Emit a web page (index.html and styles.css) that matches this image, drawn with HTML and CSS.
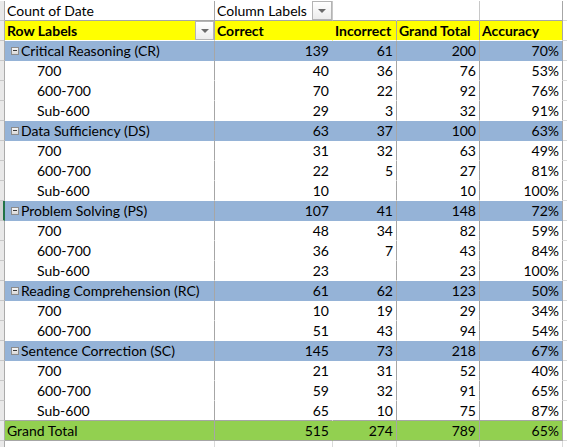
FILE: index.html
```html
<!DOCTYPE html>
<html>
<head>
<meta charset="utf-8">
<link rel="stylesheet" href="styles.css">
</head>
<body>
<div class="sheet">
  <!-- row 1 -->
  <div class="rh"></div>
  <div class="c a top">Count of Date</div>
  <div class="c b top"><span>Column Labels</span><span class="dd dd-top"><i></i></span></div>
  <div class="c cc top"></div>
  <div class="c d top"></div>
  <div class="c e top"></div>
  <div class="c f"></div>
  <!-- header -->
  <div class="rh"></div>
  <div class="c a head"><span>Row Labels</span><span class="dd"><i></i></span></div>
  <div class="c b head">Correct</div>
  <div class="c cc head">Incorrect</div>
  <div class="c d head">Grand Total</div>
  <div class="c e head">Accuracy</div>
  <div class="c f"></div>

  <div class="rh"></div><div class="c a grp"><span class="mb"></span>Critical Reasoning (CR)</div><div class="c b grp n">139</div><div class="c cc grp n">61</div><div class="c d grp n">200</div><div class="c e grp n">70%</div><div class="c f"></div>
  <div class="rh"></div><div class="c a it">700</div><div class="c b it n">40</div><div class="c cc it n">36</div><div class="c d it n">76</div><div class="c e it n">53%</div><div class="c f"></div>
  <div class="rh"></div><div class="c a it">600-700</div><div class="c b it n">70</div><div class="c cc it n">22</div><div class="c d it n">92</div><div class="c e it n">76%</div><div class="c f"></div>
  <div class="rh"></div><div class="c a it">Sub-600</div><div class="c b it n">29</div><div class="c cc it n">3</div><div class="c d it n">32</div><div class="c e it n">91%</div><div class="c f"></div>

  <div class="rh"></div><div class="c a grp"><span class="mb"></span>Data Sufficiency (DS)</div><div class="c b grp n">63</div><div class="c cc grp n">37</div><div class="c d grp n">100</div><div class="c e grp n">63%</div><div class="c f"></div>
  <div class="rh"></div><div class="c a it">700</div><div class="c b it n">31</div><div class="c cc it n">32</div><div class="c d it n">63</div><div class="c e it n">49%</div><div class="c f"></div>
  <div class="rh"></div><div class="c a it">600-700</div><div class="c b it n">22</div><div class="c cc it n">5</div><div class="c d it n">27</div><div class="c e it n">81%</div><div class="c f"></div>
  <div class="rh"></div><div class="c a it">Sub-600</div><div class="c b it n">10</div><div class="c cc it n"></div><div class="c d it n">10</div><div class="c e it n">100%</div><div class="c f"></div>

  <div class="rh active"></div><div class="c a grp"><span class="mb"></span>Problem Solving (PS)</div><div class="c b grp n">107</div><div class="c cc grp n">41</div><div class="c d grp n">148</div><div class="c e grp n">72%</div><div class="c f"></div>
  <div class="rh"></div><div class="c a it">700</div><div class="c b it n">48</div><div class="c cc it n">34</div><div class="c d it n">82</div><div class="c e it n">59%</div><div class="c f"></div>
  <div class="rh"></div><div class="c a it">600-700</div><div class="c b it n">36</div><div class="c cc it n">7</div><div class="c d it n">43</div><div class="c e it n">84%</div><div class="c f"></div>
  <div class="rh"></div><div class="c a it">Sub-600</div><div class="c b it n">23</div><div class="c cc it n"></div><div class="c d it n">23</div><div class="c e it n">100%</div><div class="c f"></div>

  <div class="rh"></div><div class="c a grp"><span class="mb"></span>Reading Comprehension (RC)</div><div class="c b grp n">61</div><div class="c cc grp n">62</div><div class="c d grp n">123</div><div class="c e grp n">50%</div><div class="c f"></div>
  <div class="rh"></div><div class="c a it">700</div><div class="c b it n">10</div><div class="c cc it n">19</div><div class="c d it n">29</div><div class="c e it n">34%</div><div class="c f"></div>
  <div class="rh"></div><div class="c a it">600-700</div><div class="c b it n">51</div><div class="c cc it n">43</div><div class="c d it n">94</div><div class="c e it n">54%</div><div class="c f"></div>

  <div class="rh"></div><div class="c a grp"><span class="mb"></span>Sentence Correction (SC)</div><div class="c b grp n">145</div><div class="c cc grp n">73</div><div class="c d grp n">218</div><div class="c e grp n">67%</div><div class="c f"></div>
  <div class="rh"></div><div class="c a it">700</div><div class="c b it n">21</div><div class="c cc it n">31</div><div class="c d it n">52</div><div class="c e it n">40%</div><div class="c f"></div>
  <div class="rh"></div><div class="c a it">600-700</div><div class="c b it n">59</div><div class="c cc it n">32</div><div class="c d it n">91</div><div class="c e it n">65%</div><div class="c f"></div>
  <div class="rh"></div><div class="c a it last">Sub-600</div><div class="c b it last n">65</div><div class="c cc it last n">10</div><div class="c d it last n">75</div><div class="c e it last n">87%</div><div class="c f"></div>

  <div class="rh"></div><div class="c a tot">Grand Total</div><div class="c b tot n">515</div><div class="c cc tot n">274</div><div class="c d tot n">789</div><div class="c e tot n">65%</div><div class="c f"></div>

  <div class="rh"></div><div class="c a emp"></div><div class="c b emp"></div><div class="c cc emp"></div><div class="c d emp"></div><div class="c e emp"></div><div class="c f"></div>
</div>
</body>
</html>
```
FILE: styles.css
```css
html, body {
  margin: 0;
  padding: 0;
  background: #ffffff;
}
body {
  font-family: "Lato", "Liberation Sans", sans-serif;
  font-size: 14px;
  color: #000000;
  overflow: hidden;
}
.sheet {
  display: grid;
  grid-template-columns: 5px 210px 118px 64px 83px 83px 1fr;
  grid-auto-rows: 20px;
  padding-top: 1px;
  width: 567px;
}
.rh {
  box-sizing: border-box;
  background: #e9e9e9;
  border-right: 1px solid #ababab;
  border-bottom: 1px solid #c8c8c8;
}
.rh.active {
  background: #d2d2d2;
  border-right: 2px solid #217346;
}
.c {
  box-sizing: border-box;
  height: 20px;
  line-height: 19px;
  white-space: nowrap;
  padding: 0 3px 0 2px;
  border-right: 1px solid transparent;
  border-bottom: 1px solid transparent;
  overflow: visible;
  position: relative;
}
.n { text-align: right; }
.f { border-bottom: 1px solid #dadada; }

/* column borders */
.a { border-right-color: #a6a6a6; }
.cc, .d, .e { border-right-color: #a6a6a6; }

/* row 1 */
.top { background: #ffffff; border-bottom-color: #a6a6a6; }
.b.top { border-right-color: #c8c8c8; display: flex; justify-content: space-between; padding-right: 0; }
.cc.top { border-right-color: transparent; }
.d.top { border-right-color: #c8c8c8; }

/* header */
.head { background: #ffff00; font-weight: bold; border-bottom-color: #ffffff; }
.a.head { display: flex; justify-content: space-between; padding-right: 0; }
.b.head { border-right-color: #ffff00; }
.cc.head, .d.head, .e.head { border-right-color: #a6a6a6; }

/* groups */
.grp { background: #95b3d7; }
.a.grp { padding-left: 0; display: flex; align-items: flex-start; }
.b.grp { border-right-color: #95b3d7; }
.mb {
  box-sizing: border-box;
  width: 8px;
  height: 8px;
  margin: 6px 2px 0 6px;
  border: 1px solid #8c8c8c;
  background: linear-gradient(#f4f4f4, #d9d9d9);
  position: relative;
  flex: none;
}
.mb::after {
  content: "";
  position: absolute;
  left: 1px;
  right: 1px;
  top: 2px;
  height: 1px;
  background: #3c3c3c;
}

/* items */
.it { background: #ffffff; }
.a.it { padding-left: 32px; }
.b.it { border-right-color: #ffffff; }
.it.last { border-bottom-color: #a6a6a6; }

/* grand total */
.tot { background: #92d050; border-bottom-color: #a6a6a6; }
.b.tot { border-right-color: #92d050; }

/* empty */
.emp { background: #ffffff; border-right-color: #dadada; }

/* dropdown buttons */
.dd {
  box-sizing: border-box;
  width: 19px;
  height: 19px;
  border: 1px solid #b4b4b4;
  background: linear-gradient(#ffffff, #ececec);
  display: flex;
  align-items: center;
  justify-content: center;
  flex: none;
}
.dd-top { width: 20px; }
.dd i {
  width: 0;
  height: 0;
  border-left: 4px solid transparent;
  border-right: 4px solid transparent;
  border-top: 4px solid #6a6a6a;
  margin-top: 1px;
}
```
